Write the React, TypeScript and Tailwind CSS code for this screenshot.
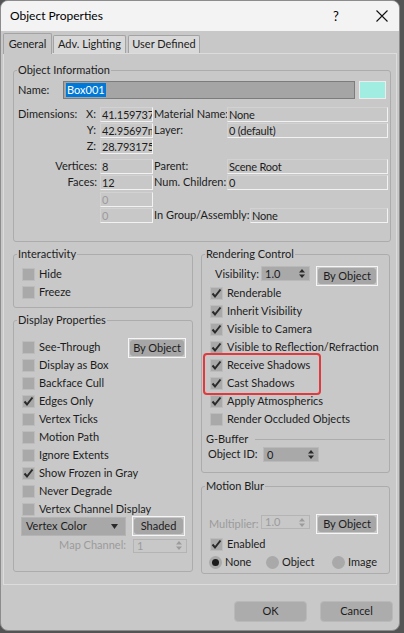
import React from 'react';

const font = "font-['Lato','Noto_Sans',sans-serif]";

function CheckBox({ checked }: { checked?: boolean }) {
  return (
    <span className="flex h-[13px] w-[13px] shrink-0 items-center justify-center border border-[#bcbcbc] bg-[#a9a9a9]">
      {checked && (
        <svg width="11" height="11" viewBox="0 0 11 11">
          <path d="M1.5 5.5 L4 8.5 L9.5 1.5" stroke="#2a2a2a" strokeWidth="2" fill="none" />
        </svg>
      )}
    </span>
  );
}

function CheckRow({ label, checked }: { label: string; checked?: boolean }) {
  return (
    <div className="flex h-[18px] items-center gap-[4px] pl-[8px]">
      <CheckBox checked={checked} />
      <span className="text-[11px] leading-[14px] text-[#1c1c1c] whitespace-nowrap">{label}</span>
    </div>
  );
}

function Radio({ label, on, w }: { label: string; on?: boolean; w: string }) {
  return (
    <div className={`${w} flex shrink-0 items-center gap-[3px]`}>
      <span className="flex h-[13px] w-[13px] items-center justify-center rounded-full bg-[#a9a9a9]">
        {on && <span className="h-[7px] w-[7px] rounded-full bg-[#1c1c1c]" />}
      </span>
      <span className="text-[11px] leading-[14px] text-[#1c1c1c]">{label}</span>
    </div>
  );
}

function Arrows({ color }: { color: string }) {
  return (
    <svg width="6" height="9" viewBox="0 0 6 9" className="shrink-0">
      <path d="M0 3.5 L3 0 L6 3.5 Z" fill={color} />
      <path d="M0 5.5 L3 9 L6 5.5 Z" fill={color} />
    </svg>
  );
}

function Spinner({ value, w, disabled }: { value: string; w: string; disabled?: boolean }) {
  return (
    <div
      className={
        disabled
          ? `${w} flex h-[14px] shrink-0 items-center justify-between border border-[#b4b4b4] bg-[#c8c8c8] pl-[3px] pr-[4px] text-[11px] leading-[12px] text-[#9b9b9b]`
          : `${w} flex h-[15px] shrink-0 items-center justify-between border border-[#b9b9b9] bg-[#a9a9a9] pl-[3px] pr-[4px] text-[11px] leading-[12px] text-[#1c1c1c]`
      }
    >
      <span>{value}</span>
      <Arrows color={disabled ? '#9b9b9b' : '#2a2a2a'} />
    </div>
  );
}

function OutlineButton({ children, w }: { children: React.ReactNode; w: string }) {
  return (
    <div className={`${w} flex h-[20px] shrink-0 border border-[#f6f6f6] p-[1px]`}>
      <div className="flex flex-1 items-center justify-center rounded-[3px] bg-[#a6a6a6] text-[11px] leading-[14px] text-[#1c1c1c] whitespace-nowrap">
        {children}
      </div>
    </div>
  );
}

function Group({ title, className, children }: { title: string; className?: string; children: React.ReactNode }) {
  return (
    <fieldset className={`min-w-0 rounded-[3px] border border-[#acacac] ${className ?? ''}`}>
      <legend className="ml-[3px] px-[1px] text-[11px] leading-[16px] text-[#1c1c1c]">{title}</legend>
      {children}
    </fieldset>
  );
}

function Field({ w, children, gray }: { w: string; children?: React.ReactNode; gray?: boolean }) {
  return (
    <div
      className={`${w} h-[15px] shrink-0 overflow-hidden whitespace-nowrap border border-t-[#d2d2d2] border-l-[#d2d2d2] border-r-[#f2f2f2] border-b-[#f2f2f2] pl-[1px] text-[11px] leading-[13px] tracking-[-0.2px] ${
        gray ? 'text-[#9b9b9b]' : 'text-[#1c1c1c]'
      }`}
    >
      {children}
    </div>
  );
}

export default function App() {
  return (
    <div className={`min-h-screen bg-[#545454] ${font}`}>
      <div className="relative flex h-[631px] w-[400px] flex-col overflow-hidden rounded-[8px] border border-[#8c8c8c] bg-[#c8c8c8] text-[#1c1c1c]">
        {/* title bar */}
        <div className="flex h-[30px] shrink-0 items-center bg-[#f3f3f3] pl-[9px]">
          <span className="text-[12px] leading-[16px] text-black">Object Properties</span>
          <div className="ml-auto mr-[11px] flex items-center gap-[35px]">
            <span className="w-[10px] text-center text-[13px] leading-[16px] text-black">?</span>
            <svg width="12" height="12" viewBox="0 0 12 12">
              <path d="M0.5 0.5 L11.5 11.5 M11.5 0.5 L0.5 11.5" stroke="#111" strokeWidth="1.1" />
            </svg>
          </div>
        </div>

        {/* tabs */}
        <div className="relative z-10 flex h-[22px] shrink-0 items-end pl-[2px] text-[11px]">
          <div className="mb-[-1px] flex h-[21px] w-[49px] items-center justify-center rounded-t-[2px] border border-b-0 border-[#a3a3a3] bg-[#c8c8c8]">
            General
          </div>
          <div className="ml-[1px] flex h-[18px] w-[73px] items-center justify-center rounded-t-[2px] border border-b-0 border-[#a3a3a3] bg-[#d8d8d8]">
            Adv. Lighting
          </div>
          <div className="ml-[2px] flex h-[18px] w-[72px] items-center justify-center rounded-t-[2px] border border-b-0 border-[#a3a3a3] bg-[#d8d8d8]">
            User Defined
          </div>
        </div>

        {/* tab panel */}
        <div className="mx-[2px] flex flex-col border border-[#dcdcdc] pb-[10px] pl-[9px] text-[11px]">
          <Group title="Object Information" className="mt-[8px] w-[378px] pb-[18px]">
            <div className="mt-[3px] flex h-[18px] items-center">
              <span className="w-[49px] pl-[4px]">Name:</span>
              <div className="flex h-[18px] w-[292px] items-center border border-[#7c7c7c] bg-[#a5a5a5] pl-[2px]">
                <span className="bg-[#0078d7] px-[1px] leading-[14px] text-white">Box001</span>
              </div>
              <div className="ml-[4px] h-[18px] w-[27px] border border-[#ececec] bg-[#a1ede2]" />
            </div>

            <div className="mt-[8px] flex h-[15px] items-center">
              <div className="flex w-[86px] justify-between pl-[4px] pr-[4px]">
                <span>Dimensions:</span>
                <span>X:</span>
              </div>
              <Field w="w-[53px]">41.159737</Field>
              <span className="w-[74px] pl-[1px] whitespace-nowrap">Material Name:</span>
              <Field w="w-[161px]">None</Field>
            </div>
            <div className="mt-[1px] flex h-[15px] items-center">
              <div className="w-[86px] pr-[4px] text-right">Y:</div>
              <Field w="w-[53px]">42.95697m</Field>
              <span className="w-[74px] pl-[1px]">Layer:</span>
              <Field w="w-[161px]">0 (default)</Field>
            </div>
            <div className="mt-[1px] flex h-[15px] items-center">
              <div className="w-[86px] pr-[4px] text-right">Z:</div>
              <Field w="w-[53px]">28.793175</Field>
            </div>
            <div className="mt-[5px] flex h-[15px] items-center">
              <div className="w-[86px] pr-[3px] text-right">Vertices:</div>
              <Field w="w-[53px]">8</Field>
              <span className="w-[74px] pl-[1px]">Parent:</span>
              <Field w="w-[161px]">Scene Root</Field>
            </div>
            <div className="mt-[1px] flex h-[15px] items-center">
              <div className="w-[86px] pr-[3px] text-right">Faces:</div>
              <Field w="w-[53px]">12</Field>
              <span className="w-[74px] pl-[1px] whitespace-nowrap">Num. Children:</span>
              <Field w="w-[161px]">0</Field>
            </div>
            <div className="mt-[2px] flex h-[15px] items-center">
              <div className="w-[86px]" />
              <Field w="w-[53px]" gray>
                0
              </Field>
            </div>
            <div className="mt-[1px] flex h-[15px] items-center">
              <div className="w-[86px]" />
              <Field w="w-[53px]" gray>
                0
              </Field>
              <span className="w-[97px] pl-[1px] whitespace-nowrap">In Group/Assembly:</span>
              <Field w="w-[138px]">None</Field>
            </div>
          </Group>

          <div className="mt-[4px] flex gap-[8px]">
            {/* left column */}
            <div className="flex w-[180px] flex-col">
              <Group title="Interactivity" className="pb-[6px]">
                <div className="mt-[3px]">
                  <CheckRow label="Hide" />
                  <CheckRow label="Freeze" />
                </div>
              </Group>

              <Group title="Display Properties" className="mt-[4px] pb-[18px]">
                <div className="mt-[10px] flex">
                  <div className="flex min-w-0 flex-1 flex-col">
                    <CheckRow label="See-Through" />
                    <CheckRow label="Display as Box" />
                    <CheckRow label="Backface Cull" />
                    <CheckRow label="Edges Only" checked />
                    <CheckRow label="Vertex Ticks" />
                    <CheckRow label="Motion Path" />
                    <CheckRow label="Ignore Extents" />
                    <CheckRow label="Show Frozen in Gray" checked />
                    <CheckRow label="Never Degrade" />
                    <CheckRow label="Vertex Channel Display" />
                  </div>
                  <div className="mr-[6px] shrink-0">
                    <OutlineButton w="w-[58px]">By Object</OutlineButton>
                  </div>
                </div>
                <div className="mt-[-2px] flex items-center pl-[7px]">
                  <div className="flex h-[19px] w-[105px] items-center justify-between border border-[#b4b4b4] bg-[#a8a8a8] pl-[4px] pr-[7px]">
                    <span>Vertex Color</span>
                    <svg width="7" height="5" viewBox="0 0 7 5">
                      <path d="M0 0 L7 0 L3.5 5 Z" fill="#2a2a2a" />
                    </svg>
                  </div>
                  <div className="ml-[6px]">
                    <OutlineButton w="w-[53px]">Shaded</OutlineButton>
                  </div>
                </div>
                <div className="mt-[2px] flex h-[15px] items-center">
                  <span className="w-[119px] pr-[7px] text-right text-[#9b9b9b]">Map Channel:</span>
                  <Spinner value="1" w="w-[54px]" disabled />
                </div>
              </Group>
            </div>

            {/* right column */}
            <div className="flex w-[189px] flex-col">
              <Group title="Rendering Control" className="pb-[10px]">
                <div className="mt-[4px] flex h-[18px] items-start pl-[13px]">
                  <span className="w-[46px] leading-[15px]">Visibility:</span>
                  <Spinner value="1.0" w="w-[49px]" />
                  <div className="ml-[6px]">
                    <OutlineButton w="w-[62px]">By Object</OutlineButton>
                  </div>
                </div>
                <CheckRow label="Renderable" checked />
                <CheckRow label="Inherit Visibility" checked />
                <CheckRow label="Visible to Camera" checked />
                <CheckRow label="Visible to Reflection/Refraction" checked />
                <CheckRow label="Receive Shadows" checked />
                <CheckRow label="Cast Shadows" checked />
                <CheckRow label="Apply Atmospherics" checked />
                <CheckRow label="Render Occluded Objects" />
                <div className="mt-[3px] flex h-[16px] items-center pl-[4px] pr-[4px]">
                  <span>G-Buffer</span>
                  <div className="ml-[7px] flex-1 border-t border-[#acacac]" />
                </div>
                <div className="flex h-[15px] items-center pl-[6px]">
                  <span className="w-[55px]">Object ID:</span>
                  <Spinner value="0" w="w-[56px]" />
                </div>
              </Group>

              <Group title="Motion Blur" className="mt-[5px] pb-[2px]">
                <div className="mt-[20px] flex h-[20px] items-start pl-[7px]">
                  <span className="w-[52px] leading-[20px] text-[#9b9b9b]">Multiplier:</span>
                  <div className="mt-[1px]">
                    <Spinner value="1.0" w="w-[49px]" disabled />
                  </div>
                  <div className="ml-[6px]">
                    <OutlineButton w="w-[62px]">By Object</OutlineButton>
                  </div>
                </div>
                <div className="mt-[2px] flex h-[17px] items-center gap-[4px] pl-[8px]">
                  <CheckBox checked />
                  <span>Enabled</span>
                </div>
                <div className="flex h-[18px] items-center pl-[7px]">
                  <Radio label="None" on w="w-[57px]" />
                  <Radio label="Object" w="w-[66px]" />
                  <Radio label="Image" w="w-[50px]" />
                </div>
              </Group>
            </div>
          </div>
        </div>

        {/* dialog buttons */}
        <div className="mt-[16px] flex justify-end gap-[13px] pr-[6px] text-[11px]">
          <div className="flex h-[21px] w-[73px] items-center justify-center rounded-[4px] border border-[#b9b9b9] bg-[#acacac]">
            OK
          </div>
          <div className="flex h-[21px] w-[73px] items-center justify-center rounded-[4px] border border-[#b9b9b9] bg-[#acacac]">
            Cancel
          </div>
        </div>

        {/* highlight around shadow options */}
        <div className="pointer-events-none absolute left-[202px] top-[352px] h-[42px] w-[118px] rounded-[4px] border-2 border-[#e0393e]" />
      </div>
    </div>
  );
}
